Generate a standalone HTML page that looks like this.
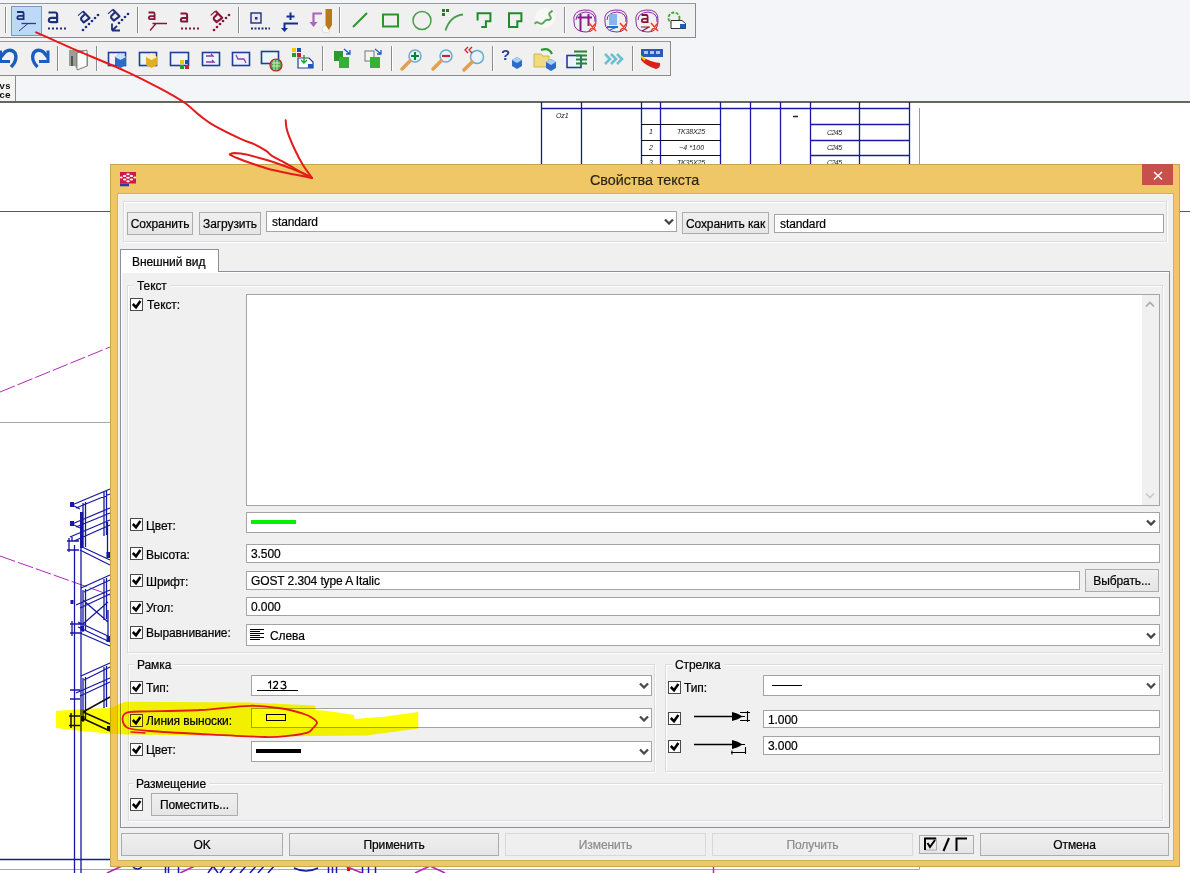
<!DOCTYPE html>
<html><head><meta charset="utf-8">
<style>
*{box-sizing:border-box;margin:0;padding:0}
html,body{width:1190px;height:873px;overflow:hidden;background:#fff}
body{position:relative;font-family:"Liberation Sans",sans-serif;font-size:12px;color:#000;-webkit-text-stroke:0.2px currentColor;letter-spacing:-0.1px}
.a{position:absolute}
#topbar{left:0;top:0;width:1190px;height:103px;background:#f4f5f8;border-bottom:2px solid #66665e}
.tb{position:absolute;background:#f0f0f0;border-top:1px solid #999;border-right:1px solid #8a8a8a;border-bottom:1px solid #8a8a8a}
.sep{position:absolute;width:1px;background:#8a8a8a;border-right:1px solid #fff}
#dlg{left:110px;top:164px;width:1070px;height:703px;background:#f0c766;border:1px solid #c5a24e}
#client{left:7px;top:30px;width:1055px;height:665px;background:#f0f0f0}
.btn{position:absolute;border:1px solid #acacac;background:linear-gradient(#f0f0f0,#e5e5e5);text-align:center;white-space:nowrap}
.fld{position:absolute;border:1px solid #a4a4a4;background:#fff;white-space:nowrap}
.grp{position:absolute;border:1px solid #dcdcdc;box-shadow:inset 1px 1px 0 #fff,1px 1px 0 #fff}
.glab{position:absolute;background:#f0f0f0;padding:0 3px;white-space:nowrap}
.cb{position:absolute;width:13px;height:13px;border:1px solid #4a4a4a;background:#fff}
.cb svg{position:absolute;left:0;top:0}
.lab{position:absolute;white-space:nowrap}
.chev{position:absolute;width:10px;height:7px}
.lab{margin-top:1px}
.btn{padding-top:1px}
.fld{padding-top:1px}
</style></head><body>

<div id="topbar" class="a">
  <div class="tb" style="left:-4px;top:3px;width:700px;height:35px"></div>
  <div class="tb" style="left:-4px;top:41px;width:675px;height:35px"></div>
  <div class="a" style="left:-10px;top:76px;width:26px;height:25px;border-right:1px solid #8a8a8a;background:#f4f4f2"></div>
</div>



<svg class="a" style="left:0;top:0" width="700" height="100" viewBox="0 0 700 100">
 <g stroke="#8c8c8c" stroke-width="1"><path d="M5.5 7V33 M137.5 7V33 M238.5 7V33 M339.5 7V33 M564.5 7V33"/></g>
 <g stroke="#fff" stroke-width="1"><path d="M6.5 7V33 M138.5 7V33 M239.5 7V33 M340.5 7V33 M565.5 7V33"/></g>
 <rect x="11.5" y="6.5" width="30" height="29" fill="#bcd9f7" stroke="#7898c0"/>
  <path d="M17.0 12 H22.5 Q23.6 12 23.6 14.0 V20 M23.6 15.95 H19.4 Q17.4 15.95 17.4 17.95 V18.0 Q17.4 19.1 19.4 19.1 H23.6" stroke="#1f2f78" stroke-width="1.8" fill="none"/>
 <path d="M48.5 12.5 H55.5 Q57.1 12.5 57.1 15.0 V23.0 M57.1 17.825 H51.4 Q48.9 17.825 48.9 20.325 V20.5 Q48.9 22.1 51.4 22.1 H57.1" stroke="#1f2f78" stroke-width="2.2" fill="none"/>
 <path d="M148.5 12.5 H153.625 Q154.6 12.5 154.6 14.375 V20.0 M154.6 16.175 H150.775 Q148.9 16.175 148.9 18.05 V18.125 Q148.9 19.1 150.775 19.1 H154.6" stroke="#8a1438" stroke-width="1.8" fill="none"/>
 <path d="M180.5 13.5 H186.0 Q187.1 13.5 187.1 15.5 V22.5 M187.1 18.0 H182.9 Q180.9 18.0 180.9 20.0 V20.5 Q180.9 21.6 182.9 21.6 H187.1" stroke="#8a1438" stroke-width="2" fill="none"/>
 <path d="M21.5 23.5H36" stroke="#2a3f80" stroke-width="1.3"/><path d="M19 31L28 23.5" stroke="#2a3f80" stroke-width="1"/>
 <path d="M152.5 23.5H167 M150 30.5L156 23.5" stroke="#8a1438" stroke-width="1.3"/>
 <path d="M48 28.5H68" stroke="#1f2f78" stroke-width="2" stroke-dasharray="2 2"/>
 <path d="M181 28.5H199" stroke="#8a1438" stroke-width="2" stroke-dasharray="2 2"/>
 <path d="M251 28.5H270" stroke="#1f2f78" stroke-width="2" stroke-dasharray="2 1.5"/>
 <g transform="translate(84.5 18.8)"><path d="M-1.7 -7.5 L5 -0.7 L-0.7 3.6 L-3.2 1 Q-3.7 0 -3.2 -1 L0 -4.2" stroke="#1f2f78" stroke-width="2.1" fill="none" stroke-linejoin="round"/><path d="M-6.5 -3.2 L-1.7 -7.5" stroke="#1f2f78" stroke-width="1.1"/></g>
 <g fill="#1f2f78"><circle cx="83" cy="30" r="1.35"/><circle cx="86" cy="27" r="1.35"/><circle cx="89" cy="24" r="1.35"/><circle cx="92" cy="21" r="1.35"/><circle cx="95" cy="18" r="1.35"/><circle cx="98" cy="15" r="1.35"/></g>
 <g transform="translate(114.5 17)"><path d="M-1.7 -7.5 L5 -0.7 L-0.7 3.6 L-3.2 1 Q-3.7 0 -3.2 -1 L0 -4.2" stroke="#1f2f78" stroke-width="2.1" fill="none" stroke-linejoin="round"/><path d="M-6.5 -3.2 L-1.7 -7.5" stroke="#1f2f78" stroke-width="1.1"/></g>
 <g fill="#1f2f78"><circle cx="119" cy="23" r="1.35"/><circle cx="122" cy="20" r="1.35"/><circle cx="125" cy="17" r="1.35"/><circle cx="128" cy="14" r="1.35"/></g>
 <path d="M112 30.5L117 26 M112 30.5H120 M112 30.5V23.5" stroke="#1f2f78" stroke-width="1.8" fill="none"/>
 <g transform="translate(217.2 18.5)"><path d="M-1.7 -7.5 L5 -0.7 L-0.7 3.6 L-3.2 1 Q-3.7 0 -3.2 -1 L0 -4.2" stroke="#8a1438" stroke-width="2.1" fill="none" stroke-linejoin="round"/><path d="M-6.5 -3.2 L-1.7 -7.5" stroke="#8a1438" stroke-width="1.1"/></g>
 <g fill="#8a1438"><circle cx="214" cy="30" r="1.35"/><circle cx="217" cy="27" r="1.35"/><circle cx="220" cy="24" r="1.35"/><circle cx="223" cy="21" r="1.35"/><circle cx="226" cy="18" r="1.35"/><circle cx="229" cy="15" r="1.35"/></g>
 <rect x="251" y="13" width="10" height="10" fill="#e8e8f0" stroke="#1f2f78" stroke-width="1.4"/><rect x="255" y="17" width="2.5" height="2.5" fill="#1f2f78"/>
 <path d="M290.5 12.5V20 M286.5 16.5H294.5" stroke="#10308c" stroke-width="2"/>
 <path d="M298 23.5H284.5V29" stroke="#10308c" stroke-width="2" fill="none"/><path d="M281 28H288L284.5 32Z" fill="#10308c"/>
 <path d="M322 13.5H313.5V24" stroke="#a868b8" stroke-width="2.2" fill="none"/><path d="M309.5 22H317.5L313.5 27Z" fill="#a868b8"/>
 <circle cx="326" cy="29" r="4" fill="#fafafa" stroke="#ddd"/>
 <path d="M325.5 9H332V25L328.8 30L325.5 25Z" fill="#b77a16"/>
 <path d="M353 27L367 13" stroke="#2a962a" stroke-width="2"/>
 <rect x="383" y="14.5" width="15" height="12" fill="none" stroke="#2a962a" stroke-width="2"/>
 <circle cx="422" cy="20.5" r="9" fill="none" stroke="#48a048" stroke-width="1.5"/>
 <rect x="442" y="9" width="3" height="3" fill="#2a7a2a"/><rect x="446" y="9" width="3" height="3" fill="#2a7a2a"/><rect x="442" y="13" width="3" height="3" fill="#2a7a2a"/>
 <path d="M445.5 30.5Q450 16 463 14.5" stroke="#48a048" stroke-width="1.8" fill="none"/>
 <path d="M477.6 20.5V13.3H490.4V21.3H485.9V26.9H481.3" stroke="#1e8a2a" stroke-width="2" fill="none"/>
 <path d="M509 26.9V13.3H521.4V21.3H517.3V26.9Z" stroke="#1e8a2a" stroke-width="2" fill="none"/>
 <circle cx="545" cy="18" r="10" fill="#f8f8f6"/>
 <path d="M535 24Q536 21 539 23Q542 25 544 22Q546 19 549 20Q552 19 550 16Q548 13 551 12L552.5 10.5" stroke="#58a858" stroke-width="2" fill="none"/>
 <g fill="none" stroke="#8a2aa0" stroke-width="1">
  <path d="M574 22Q572 11 584 10Q597 9 596 21Q596 32 586 32Q574 32 574 22Z"/><path d="M576 20Q576 13 586 12Q596 13 595 22"/>
  <path d="M605 22Q603 11 615 10Q628 9 627 21Q627 32 617 32Q605 32 605 22Z"/><path d="M607 20Q607 13 617 12Q627 13 626 22"/>
  <path d="M636 22Q634 11 646 10Q659 9 658 21Q658 32 648 32Q636 32 636 22Z"/><path d="M638 20Q638 13 648 12Q658 13 657 22"/>
 </g>
 <path d="M577.5 17.5H592 M580.5 14V31 M588.5 14V26" stroke="#8a1a8a" stroke-width="2"/>
 <rect x="609" y="14" width="8" height="11" fill="#8ab4ee"/><path d="M607 27H618" stroke="#2070d0" stroke-width="2"/><path d="M610 30L617 27" stroke="#2070d0" stroke-width="1.2"/>
 <path d="M641.5 15 H646.625 Q647.6 15 647.6 16.875 V23 M647.6 18.95 H643.775 Q641.9 18.95 641.9 20.825 V21.125 Q641.9 22.1 643.775 22.1 H647.6" stroke="#8a1438" stroke-width="1.8" fill="none"/><path d="M641 27H650M642 31L649 27" stroke="#8a1438" stroke-width="1.2"/>
 <g stroke="#e84020" stroke-width="1.5"><path d="M589 23L596 31 M596 23L589 31 M620 23L627 31 M627 23L620 31 M651 23L658 31 M658 23L651 31"/></g>
 <circle cx="674" cy="18" r="5.5" fill="none" stroke="#38a838" stroke-width="1.8" stroke-dasharray="3 1.5"/>
 <path d="M671 20.5H682L685.5 23.5V28.5H671Z" fill="#fff" stroke="#333" stroke-width="1"/><rect x="680" y="24" width="5.5" height="4.5" fill="#1c5cc0"/>
 <g stroke="#8c8c8c" stroke-width="1"><path d="M57.5 46V71 M96.5 46V71 M322.5 46V71 M391.5 46V71 M492.5 46V71 M593.5 46V71 M632.5 46V71"/></g>
 <g stroke="#fff" stroke-width="1"><path d="M58.5 46V71 M97.5 46V71 M323.5 46V71 M392.5 46V71 M493.5 46V71 M594.5 46V71 M633.5 46V71"/></g>
 <path d="M11 67 Q18 60 15 53 Q11 48 5 52 L1 57" stroke="#1a5cc0" stroke-width="3.4" fill="none"/><path d="M0.5 50.5V61.5H10" stroke="#1a5cc0" stroke-width="3" fill="none"/>
 <path d="M37.5 67 Q30.5 60 33.5 53 Q37.5 48 43.5 52 L47.5 57" stroke="#1a5cc0" stroke-width="3.4" fill="none"/><path d="M48 50.5V61.5H39" stroke="#1a5cc0" stroke-width="3" fill="none"/>
 <path d="M69 50H86L88 54V66L78 70L75 66H69Z" fill="#9a9e98"/><path d="M77 53L87 50V66L77 70Z" fill="#fbfbfb" stroke="#6a6e6a" stroke-width="0.8"/><path d="M72 56V66" stroke="#555" stroke-width="2"/>
 <g fill="#eef4fc" stroke="#1f3e96" stroke-width="1.6">
  <rect x="108.5" y="52.5" width="17" height="13"/><rect x="139.5" y="52.5" width="17" height="13"/><rect x="170.5" y="52.5" width="18" height="13"/><rect x="202.5" y="52.5" width="17" height="13"/><rect x="232.5" y="52.5" width="17" height="13"/><rect x="261.5" y="51.5" width="17" height="12"/>
 </g>
 <path d="M115 57L120.5 53L126 57V65L120.5 68L115 65Z" fill="#2c6cc8"/><path d="M115 57L120.5 53L126 57L120.5 60Z" fill="#c8e0fa"/>
 <path d="M146 57L151.5 53L157 57V65L151.5 68L146 65Z" fill="#e0b020"/><path d="M146 57L151.5 53L157 57L151.5 60Z" fill="#fff4c0"/>
 <rect x="180" y="60" width="4" height="4" fill="#f0c800"/><rect x="185" y="60" width="4" height="4" fill="#1850b0"/><rect x="180" y="65" width="4" height="4" fill="#20a020"/><rect x="185" y="65" width="4" height="4" fill="#d02020"/>
 <path d="M206 56H213L211 54 M206 62H214L212 60" stroke="#8a3ab0" stroke-width="1.3" fill="none"/>
 <path d="M236 55L238 59 L244 59 L246 63" stroke="#8a3ab0" stroke-width="1.3" fill="none"/>
 <circle cx="276" cy="65" r="6" fill="#48a848" stroke="#c02020" stroke-width="1.2"/><path d="M272 63H280M272 66H280M274 60V70M277 60V70" stroke="#d8f0d8" stroke-width="0.9"/>
 <rect x="292" y="48" width="4" height="4" fill="#f0c800"/><rect x="297" y="48" width="4" height="4" fill="#1850b0"/><rect x="292" y="53" width="4" height="4" fill="#20a020"/><rect x="297" y="53" width="4" height="4" fill="#d02020"/>
 <path d="M298 58H309L313 62V68H298Z" fill="#fff" stroke="#1f3e96" stroke-width="1.2"/><rect x="308" y="64" width="5" height="4" fill="#1c5cc0"/><path d="M304 55V63M301 60L304 63L307 60" stroke="#20a020" stroke-width="1.4" fill="none"/>
 <rect x="334" y="51" width="9" height="10" fill="#2a9a2a"/><rect x="339" y="57" width="10" height="11" fill="#36b036"/><path d="M344 49L350 54M350 50V54H346" stroke="#1c5cc0" stroke-width="1.3" fill="none"/>
 <rect x="365" y="51" width="9" height="10" fill="#f4f4f4" stroke="#777"/><rect x="370" y="57" width="10" height="11" fill="#36b036"/><path d="M375 49L381 54M381 50V54H377" stroke="#1c5cc0" stroke-width="1.3" fill="none"/>
 <g><circle cx="415" cy="56" r="6" fill="#e8f4fa" stroke="#6aaad0" stroke-width="1.5"/><path d="M410 61L402 69" stroke="#e0a050" stroke-width="3.5" stroke-linecap="round"/><path d="M415 52V60M411 56H419" stroke="#108030" stroke-width="2.2"/></g>
 <g><circle cx="446" cy="56" r="6" fill="#e8f4fa" stroke="#6aaad0" stroke-width="1.5"/><path d="M441 61L433 69" stroke="#e0a050" stroke-width="3.5" stroke-linecap="round"/><path d="M442 56H450" stroke="#d02030" stroke-width="2.2"/></g>
 <g><circle cx="477" cy="57" r="6.5" fill="#e8f4fa" stroke="#6aaad0" stroke-width="1.5"/><path d="M472 62L464 70" stroke="#e0a050" stroke-width="3.5" stroke-linecap="round"/><path d="M468 47L465 50L468 53M472 47L469 50L472 53" stroke="#d02020" stroke-width="1.3" fill="none"/></g>
 <text x="501" y="60" font-family="Liberation Sans" font-weight="bold" font-size="15" fill="#2a3e8e">?</text>
 <path d="M512 60L517 57L522 60V66L517 69L512 66Z" fill="#2c6cc8"/><path d="M512 60L517 57L522 60L517 63Z" fill="#a8d0fa"/>
 <path d="M534 54H541L543 56H549V67H534Z" fill="#f0dc80" stroke="#c8a830" stroke-width="0.8"/>
 <path d="M541 50Q549 47 552 54" stroke="#2a9a2a" stroke-width="2" fill="none"/>
 <path d="M546 62L551 59L556 62V68L551 71L546 68Z" fill="#2c6cc8"/><path d="M546 62L551 59L556 62L551 65Z" fill="#a8d0fa"/>
 <rect x="567" y="55.5" width="14" height="12" fill="#eef4fc" stroke="#1f3e96" stroke-width="1.6"/>
 <path d="M574 51.5H587M576 55.5H587M576 59.5H587M576 63.5H587" stroke="#1e8a2e" stroke-width="2"/>
 <path d="M605 54L610 59L605 64 M611 54L616 59L611 64 M617 54L622 59L617 64" stroke="#6ac0d0" stroke-width="2.6" fill="none"/>
 <rect x="641" y="49" width="22" height="8" fill="#2858b8"/><rect x="644" y="51" width="4" height="3" fill="#a8c8f0"/><rect x="650" y="51" width="4" height="3" fill="#a8c8f0"/><rect x="656" y="51" width="4" height="3" fill="#a8c8f0"/>
 <path d="M641 56Q650 62 660 63Q661 68 656 69Q646 66 641 60Z" fill="#d82020"/>
 <path d="M641 56L645 60" stroke="#e8d020" stroke-width="2"/>
 <text x="10.5" y="88.5" font-family="Liberation Mono" font-size="9.5" font-weight="bold" fill="#111" text-anchor="end">vs</text>
 <text x="10.5" y="97.5" font-family="Liberation Mono" font-size="9.5" font-weight="bold" fill="#111" text-anchor="end">rce</text>
</svg>

<!-- CAD canvas -->
<svg class="a" style="left:0;top:102px" width="1190" height="771" viewBox="0 102 1190 771">
 <g stroke="#1818a4" stroke-width="1.3" fill="none">
  <path d="M541.5 102V164 M581.5 102V164 M641.5 102V164 M660.5 102V164 M720.5 102V164 M750.5 102V164 M780.5 102V164 M810.5 102V164 M859.5 102V164 M909.5 102V164"/>
  <path d="M541 108.5H910"/>
  <path d="M810 124.5H910 M810 140.5H910 M810 155.5H910"/>
 </g>
 <path d="M641 124.5H721 M641 140.5H721 M641 155.5H721" stroke="#111" stroke-width="1.2"/>
 <path d="M919.5 108V164" stroke="#999" stroke-width="1"/>
 <g font-family="Liberation Sans" font-style="italic" font-size="7" fill="#222">
  <text x="556" y="118">Oz1</text>
  <text x="649" y="134">1</text><text x="677" y="134" textLength="28">TK38X25</text>
  <text x="649" y="150">2</text><text x="679" y="150" textLength="25">−4 *100</text>
  <text x="649" y="165">3</text><text x="677" y="165" textLength="28">TK35X25</text>
  <text x="827" y="135" textLength="15">C245</text>
  <text x="827" y="150" textLength="15">C245</text>
  <text x="827" y="165" textLength="15">C245</text>
 </g>
 <path d="M793 116.5H798" stroke="#222" stroke-width="1.5"/>
 <path d="M0 211.5H110 M1180 211.5H1190" stroke="#a820b0" stroke-width="1"/>
 <path d="M0 392L110 347" stroke="#b428b8" stroke-width="1" stroke-dasharray="16 3"/>
 <path d="M0 556L110 595" stroke="#b428b8" stroke-width="1" stroke-dasharray="16 3"/>
 <path d="M0 422.5H110" stroke="#a8a8a8" stroke-width="1"/>
 <path d="M0 859.5H110" stroke="#1818a4" stroke-width="1.3"/>
 <path d="M0 869.5H919.5V866" stroke="#a8a8a8" stroke-width="1" fill="none"/>
 <path d="M713.5 866V873" stroke="#b428b8" stroke-width="1.5"/>
 <!-- railing -->
 <path d="M74.5 545V873 M81 548V873" stroke="#1818a4" stroke-width="1.3"/>
 <path d="M72 505L110 489 M76 508L110 494 M72 524L110 508 M76 527L110 513 M72 505L80 509 M72 524L80 528 M70 537L110 520 M74 541L110 525 M72 537L72 541 M80 546L110 560 M80 550L110 565 M83 503L83 548 M85.5 502L85.5 547 M104 492L104 536 M106.5 491L106.5 535 M107.5 522L107.5 558 M67 541L79 541 M67 550L79 550 M69 538L69 552" stroke="#1818a4" stroke-width="1.3" fill="none"/><g fill="#1818a4"><rect x="70" y="502" width="4" height="5"/><rect x="70" y="521" width="4" height="5"/><rect x="80" y="512" width="3.2" height="36"/><rect x="106.5" y="552" width="3.5" height="6"/></g>
 <path d="M81 588L110 575 M84 592L110 580 M76 605L110 590 M80 608L110 594 M83 600L108 622 M83 624L108 602 M70 624L82 624 M70 633L82 633 M72 621L72 636 M78 622L110 637 M78 627L110 642 M80 633L110 646 M83 590L83 632 M85.5 589L85.5 631 M104 579L104 620 M106.5 578L106.5 619 M108 610L108 642" stroke="#1818a4" stroke-width="1.3" fill="none"/><g fill="#1818a4"><rect x="80.5" y="626" width="3.5" height="5"/><rect x="106.5" y="636" width="3.5" height="6"/><rect x="70.5" y="600" width="3" height="4"/></g>
 <path d="M81 676L110 663 M84 680L110 667 M76 693L110 678 M80 696L110 682 M83 678L83 722 M85.5 677L85.5 720 M104 667L104 708 M106.5 666L106.5 707 M70 690L80 690 M70 699L80 699" stroke="#1818a4" stroke-width="1.3" fill="none"/>
 <path d="M83 712L110 697 M83 712L110 724 M69 725.5H80 M69 716H80 M84 719L110 731 M71 713V728" stroke="#111" stroke-width="1.5" fill="none"/><rect x="81" y="716" width="3.5" height="5" fill="#111"/><rect x="107" y="726" width="3.5" height="5" fill="#111"/>
 <!-- bottom scribbles -->
 <path d="M107 873L122 866 M180 873L195 866 M345 866L362 873 M415 873L430 866 M430 866L445 873" stroke="#b428b8" stroke-width="1.6"/>
 <g stroke="#1818a4" stroke-width="1.5" fill="none">
  <path d="M165.5 866V873 M168.5 866V873 M178.5 866V873 M328.5 866V873 M332.5 866V873 M336.5 866V873 M362.5 866V873 M368.5 866V873 M375.5 866V873"/>
  <path d="M208 873L213 866 M213 866L218 873 M220 873L225 866 M230 873L236 866 M240 873L246 866 M250 873L256 866 M258 873L264 866 M268 873L274 866"/>
  <path d="M294 868Q306 874 318 868"/>
  <path d="M133 867Q137 871 142 867"/>
 </g>
 <rect x="347" y="868" width="3" height="3" fill="#e01010"/>
</svg>

<!-- dialog -->
<div class="a" style="left:110px;top:164px;width:1070px;height:703px;background:#f0c766;border:1px solid #c9a452"></div>
<div class="a" style="left:117px;top:193px;width:1057px;height:668px;border:1px solid #d2b060"></div>
<div class="a" style="left:118px;top:194px;width:1055px;height:666px;background:#f0f0f0;border:1px solid #fbf6ee;border-right:none;border-bottom:none"></div>
<!-- title -->
<svg class="a" style="left:116px;top:167px" width="24" height="24" viewBox="116 167 24 24">
 <rect x="120" y="172" width="16" height="11.5" fill="#d01848"/>
 <rect x="120" y="183.5" width="9" height="2.8" fill="#2a3f9a"/>
 <g fill="#fff">
  <ellipse cx="128" cy="174.3" rx="1.8" ry="1"/>
  <ellipse cx="124.6" cy="176" rx="1.8" ry="1"/><ellipse cx="131.4" cy="176" rx="1.8" ry="1"/>
  <ellipse cx="121.3" cy="177.6" rx="1.4" ry="1"/><ellipse cx="128" cy="177.8" rx="1.8" ry="1"/><ellipse cx="134.8" cy="177.6" rx="1.4" ry="1"/>
  <ellipse cx="124.6" cy="179.4" rx="1.8" ry="1"/><ellipse cx="131.4" cy="179.4" rx="1.8" ry="1"/>
  <ellipse cx="128" cy="181.3" rx="1.8" ry="1"/>
 </g>
</svg>
<div class="lab" style="left:590px;top:170px;font-size:15.5px;line-height:18px;color:#2a2418;letter-spacing:0;transform:scaleX(0.925);transform-origin:0 0">Свойства текста</div>
<div class="a" style="left:1142px;top:164px;width:31px;height:21px;background:#c7504b"></div>
<svg class="a" style="left:1150px;top:168px" width="16" height="14" viewBox="1150 168 16 14"><path d="M1154 172 L1162 179.5 M1162 172 L1154 179.5" stroke="#fff" stroke-width="1.5"/></svg>

<!-- top group -->
<div class="grp" style="left:123px;top:201px;width:1044px;height:41px"></div>
<div class="btn" style="left:127px;top:212px;width:66px;height:23px;line-height:21px">Сохранить</div>
<div class="btn" style="left:199px;top:212px;width:62px;height:23px;line-height:21px">Загрузить</div>
<div class="fld" style="left:266px;top:211px;width:411px;height:21px;line-height:19px;padding-left:5px">standard</div>
<svg class="chev" style="left:664px;top:218px" viewBox="0 0 10 7"><path d="M1 1.5 L5 5.5 L9 1.5" stroke="#444" stroke-width="2.3" fill="none"/></svg>
<div class="btn" style="left:682px;top:212px;width:87px;height:22px;line-height:20px">Сохранить как</div>
<div class="fld" style="left:774px;top:214px;width:390px;height:19px;line-height:17px;padding-left:5px">standard</div>

<!-- tab -->
<div class="a" style="left:120px;top:271px;width:1050px;height:557px;border:1px solid #8f9096;background:#f0f0f0;box-shadow:inset 1px 1px 0 #fff"></div>
<div class="a" style="left:120px;top:249px;width:99px;height:23px;border:1px solid #8f9096;border-bottom:none;background:#fff"></div>
<div class="lab" style="left:132px;top:254px;line-height:14px">Внешний вид</div>

<!-- Текст group -->
<div class="grp" style="left:127px;top:285px;width:1036px;height:368px"></div>
<div class="glab" style="left:134px;top:279px;line-height:14px">Текст</div>
<div class="fld" style="left:246px;top:294px;width:914px;height:212px"></div>
<div class="a" style="left:1142px;top:295px;width:17px;height:210px;background:#f0f0f0"></div>
<svg class="chev" style="left:1145px;top:301px" viewBox="0 0 10 7"><path d="M1 5.5 L5 1.5 L9 5.5" stroke="#a8a8a8" stroke-width="1.6" fill="none"/></svg>
<svg class="chev" style="left:1145px;top:492px" viewBox="0 0 10 7"><path d="M1 1.5 L5 5.5 L9 1.5" stroke="#c8c8c8" stroke-width="1.6" fill="none"/></svg>

<div class="cb" style="left:130px;top:298px"><svg width="11" height="11" viewBox="0 0 11 11"><path d="M1.8 5 L5 8.2 L9.4 2" stroke="#000" stroke-width="2.5" fill="none"/></svg></div><div class="lab" style="left:147px;top:297px;line-height:14px">Текст:</div>
<div class="cb" style="left:130px;top:518px"><svg width="11" height="11" viewBox="0 0 11 11"><path d="M1.8 5 L5 8.2 L9.4 2" stroke="#000" stroke-width="2.5" fill="none"/></svg></div><div class="lab" style="left:146px;top:518px;line-height:14px">Цвет:</div>
<div class="fld" style="left:246px;top:512px;width:914px;height:21px"></div>
<div class="a" style="left:251px;top:520px;width:45px;height:4px;background:#00f000"></div>
<svg class="chev" style="left:1146px;top:519px" viewBox="0 0 10 7"><path d="M1 1.5 L5 5.5 L9 1.5" stroke="#444" stroke-width="2.3" fill="none"/></svg>
<div class="cb" style="left:130px;top:547px"><svg width="11" height="11" viewBox="0 0 11 11"><path d="M1.8 5 L5 8.2 L9.4 2" stroke="#000" stroke-width="2.5" fill="none"/></svg></div><div class="lab" style="left:146px;top:547px;line-height:14px">Высота:</div>
<div class="fld" style="left:246px;top:544px;width:914px;height:19px;line-height:17px;padding-left:4px">3.500</div>
<div class="cb" style="left:130px;top:574px"><svg width="11" height="11" viewBox="0 0 11 11"><path d="M1.8 5 L5 8.2 L9.4 2" stroke="#000" stroke-width="2.5" fill="none"/></svg></div><div class="lab" style="left:146px;top:574px;line-height:14px">Шрифт:</div>
<div class="fld" style="left:246px;top:571px;width:834px;height:19px;line-height:17px;padding-left:4px">GOST 2.304 type A Italic</div>
<div class="btn" style="left:1085px;top:569px;width:74px;height:23px;line-height:21px">Выбрать...</div>
<div class="cb" style="left:130px;top:601px"><svg width="11" height="11" viewBox="0 0 11 11"><path d="M1.8 5 L5 8.2 L9.4 2" stroke="#000" stroke-width="2.5" fill="none"/></svg></div><div class="lab" style="left:146px;top:600px;line-height:14px">Угол:</div>
<div class="fld" style="left:246px;top:597px;width:914px;height:19px;line-height:17px;padding-left:4px">0.000</div>
<div class="cb" style="left:130px;top:626px"><svg width="11" height="11" viewBox="0 0 11 11"><path d="M1.8 5 L5 8.2 L9.4 2" stroke="#000" stroke-width="2.5" fill="none"/></svg></div><div class="lab" style="left:146px;top:625px;line-height:14px">Выравнивание:</div>
<div class="fld" style="left:246px;top:624px;width:914px;height:22px"></div>
<svg class="a" style="left:250px;top:629px" width="14" height="11" viewBox="0 0 14 11"><path d="M0 0.5H14M0 2.5H10M0 4.5H14M0 6.5H10M0 8.5H14M0 10.5H10" stroke="#000" stroke-width="1"/></svg>
<div class="lab" style="left:270px;top:628px;line-height:14px">Слева</div>
<svg class="chev" style="left:1146px;top:632px" viewBox="0 0 10 7"><path d="M1 1.5 L5 5.5 L9 1.5" stroke="#444" stroke-width="2.3" fill="none"/></svg>

<!-- Рамка -->
<div class="grp" style="left:128px;top:664px;width:527px;height:108px"></div>
<div class="glab" style="left:134px;top:658px;line-height:14px">Рамка</div>
<div class="cb" style="left:130px;top:681px"><svg width="11" height="11" viewBox="0 0 11 11"><path d="M1.8 5 L5 8.2 L9.4 2" stroke="#000" stroke-width="2.5" fill="none"/></svg></div><div class="lab" style="left:146px;top:680px;line-height:14px">Тип:</div>
<div class="fld" style="left:251px;top:675px;width:401px;height:21px"></div>
<svg class="a" style="left:265px;top:679px" width="25" height="12" viewBox="265 679 25 12"><path d="M268.3 683.2 L270.5 681.3 V688.8 M273.4 683 Q273.8 681.3 275.6 681.3 Q277.6 681.3 277.6 683.1 Q277.6 684.5 273.6 688.3 H278 M280.8 682.3 Q281.6 681.3 283.3 681.3 Q285.5 681.3 285.5 683 Q285.5 684.7 283 684.8 Q286 684.9 286 686.8 Q286 688.8 283.3 688.8 Q281.3 688.8 280.6 687.6" stroke="#000" stroke-width="1.15" fill="none"/></svg>
<div class="a" style="left:257px;top:690px;width:41px;height:1px;background:#000"></div>
<svg class="chev" style="left:639px;top:682px" viewBox="0 0 10 7"><path d="M1 1.5 L5 5.5 L9 1.5" stroke="#4a4a4a" stroke-width="2.3" fill="none"/></svg>
<div class="cb" style="left:130px;top:714px"><svg width="11" height="11" viewBox="0 0 11 11"><path d="M1.8 5 L5 8.2 L9.4 2" stroke="#000" stroke-width="2.5" fill="none"/></svg></div><div class="lab" style="left:146px;top:713px;line-height:14px">Линия выноски:</div>
<div class="fld" style="left:251px;top:708px;width:401px;height:20px"></div>
<div class="a" style="left:266px;top:714px;width:20px;height:7px;border:1px solid #000"></div>
<svg class="chev" style="left:639px;top:715px" viewBox="0 0 10 7"><path d="M1 1.5 L5 5.5 L9 1.5" stroke="#4a4a4a" stroke-width="2.3" fill="none"/></svg>
<div class="cb" style="left:130px;top:743px"><svg width="11" height="11" viewBox="0 0 11 11"><path d="M1.8 5 L5 8.2 L9.4 2" stroke="#000" stroke-width="2.5" fill="none"/></svg></div><div class="lab" style="left:146px;top:742px;line-height:14px">Цвет:</div>
<div class="fld" style="left:251px;top:741px;width:401px;height:21px"></div>
<div class="a" style="left:256px;top:749px;width:45px;height:4px;background:#000"></div>
<svg class="chev" style="left:639px;top:748px" viewBox="0 0 10 7"><path d="M1 1.5 L5 5.5 L9 1.5" stroke="#4a4a4a" stroke-width="2.3" fill="none"/></svg>

<!-- Стрелка -->
<div class="grp" style="left:665px;top:664px;width:498px;height:108px"></div>
<div class="glab" style="left:672px;top:658px;line-height:14px">Стрелка</div>
<div class="cb" style="left:668px;top:681px"><svg width="11" height="11" viewBox="0 0 11 11"><path d="M1.8 5 L5 8.2 L9.4 2" stroke="#000" stroke-width="2.5" fill="none"/></svg></div><div class="lab" style="left:684px;top:680px;line-height:14px">Тип:</div>
<div class="fld" style="left:763px;top:675px;width:397px;height:21px"></div>
<div class="a" style="left:772px;top:685px;width:30px;height:1px;background:#000"></div>
<svg class="chev" style="left:1146px;top:682px" viewBox="0 0 10 7"><path d="M1 1.5 L5 5.5 L9 1.5" stroke="#4a4a4a" stroke-width="2.3" fill="none"/></svg>
<div class="cb" style="left:668px;top:712px"><svg width="11" height="11" viewBox="0 0 11 11"><path d="M1.8 5 L5 8.2 L9.4 2" stroke="#000" stroke-width="2.5" fill="none"/></svg></div>
<svg class="a" style="left:690px;top:705px" width="65" height="55" viewBox="690 705 65 55">
 <path d="M694 716.5H733" stroke="#000" stroke-width="1.3"/>
 <path d="M732 712 L737 713.5 L740 715 L742.5 716.5 L740 718 L737 719.5 L732 721 Z" fill="#000"/><path d="M741 716.5H745" stroke="#000" stroke-width="1"/>
 <path d="M740 712.5H750 M740 720.5H750 M747.5 711V722" stroke="#000" stroke-width="1.1"/>
 <path d="M694 744.5H733" stroke="#000" stroke-width="1.3"/>
 <path d="M732 740 L737 741.5 L740 743 L742.5 744.5 L740 746 L737 747.5 L732 749 Z" fill="#000"/><path d="M741 744.5H745" stroke="#000" stroke-width="1"/>
 <path d="M731 752.5H746 M745.5 747V754 M732 750.5V754.5" stroke="#000" stroke-width="1.1"/>
</svg>
<div class="fld" style="left:763px;top:710px;width:397px;height:18px;line-height:16px;padding-left:4px">1.000</div>
<div class="cb" style="left:668px;top:740px"><svg width="11" height="11" viewBox="0 0 11 11"><path d="M1.8 5 L5 8.2 L9.4 2" stroke="#000" stroke-width="2.5" fill="none"/></svg></div>

<div class="fld" style="left:763px;top:736px;width:397px;height:19px;line-height:17px;padding-left:4px">3.000</div>

<!-- Размещение -->
<div class="grp" style="left:128px;top:783px;width:1035px;height:38px"></div>
<div class="glab" style="left:133px;top:777px;line-height:14px">Размещение</div>
<div class="cb" style="left:130px;top:798px"><svg width="11" height="11" viewBox="0 0 11 11"><path d="M1.8 5 L5 8.2 L9.4 2" stroke="#000" stroke-width="2.5" fill="none"/></svg></div>
<div class="btn" style="left:151px;top:793px;width:87px;height:23px;line-height:21px">Поместить...</div>

<!-- bottom buttons -->
<div class="btn" style="left:121px;top:833px;width:162px;height:23px;line-height:21px">OK</div>
<div class="btn" style="left:289px;top:833px;width:210px;height:23px;line-height:21px">Применить</div>
<div class="btn" style="left:505px;top:833px;width:201px;height:23px;line-height:21px;color:#8d8d8d;border-color:#d9d9d9;background:#efefef">Изменить</div>
<div class="btn" style="left:712px;top:833px;width:201px;height:23px;line-height:21px;color:#8d8d8d;border-color:#d9d9d9;background:#efefef">Получить</div>
<div class="btn" style="left:919px;top:835px;width:55px;height:19px"></div>
<svg class="a" style="left:924px;top:837px" width="46" height="15" viewBox="0 0 46 15"><path d="M1 13V1.5H12" stroke="#000" stroke-width="2" fill="none"/><path d="M1 1H12.5V13H1" stroke="#000" stroke-width="1" fill="none" opacity="0.25"/><path d="M3.5 6 L6 10 L11 3" stroke="#000" stroke-width="2" fill="none"/><path d="M25 1 L19.5 14" stroke="#000" stroke-width="2"/><path d="M32.5 14V1.5H43" stroke="#000" stroke-width="2" fill="none"/></svg>
<div class="btn" style="left:980px;top:833px;width:189px;height:23px;line-height:21px">Отмена</div>


<!-- annotations -->
<svg class="a" style="left:0;top:0;mix-blend-mode:multiply" width="1190" height="873" viewBox="0 0 1190 873">
 <path d="M56 711 Q80 709 110 708 L125 701.7 L250 702.6 L315.3 705.6 L315.3 709.7 L334.7 712 L354 715 L354.5 719 L384 716.8 L418.2 712.1 L418.2 728.5 L395.9 731.5 L366.5 735.6 L290 736.2 L240 736.5 Q180 735 125 734.5 L110 733.6 Q80 731 56 728 Z" fill="#ffff00"/>
</svg>
<svg class="a" style="left:0;top:0" width="1190" height="873" viewBox="0 0 1190 873">
 <g stroke="#e51a1a" stroke-width="2" fill="none" stroke-linecap="round" stroke-linejoin="round">
  <path d="M36.2 32.3 C42.2 35.0 57.3 42.0 72.0 48.4 C86.7 54.8 109.5 63.9 124.2 70.6 C138.9 77.3 150.0 83.1 160.0 88.4 C170.0 93.7 177.5 97.9 184.2 102.5 C190.9 107.1 195.4 112.1 200.3 115.9 C205.2 119.7 207.1 121.5 213.8 125.3 C220.5 129.1 234.0 135.7 240.7 138.8 C247.4 142.0 249.8 142.2 254.1 144.2 C258.4 146.2 263.3 149.0 266.2 150.9 C269.1 152.8 268.0 153.4 271.6 155.6 C275.2 157.8 282.8 161.5 287.7 164.3 C292.6 167.1 297.1 170.1 301.2 172.4 C305.2 174.7 310.2 177.1 312.0 178.0"/>
  <path d="M285.7 120.2 C285.8 121.5 285.9 125.3 286.5 128.0 C287.1 130.7 287.6 132.4 289.0 136.1 C290.4 139.8 292.8 145.3 295.0 150.0 C297.2 154.7 299.7 159.6 302.5 164.3 C305.3 169.0 310.4 175.7 312.0 178.0"/>
  <path d="M312.0 178.0 C310.4 177.2 305.4 174.4 302.5 173.0 C299.6 171.6 300.2 171.8 294.4 169.7 C288.6 167.6 276.6 163.0 267.6 160.3 C258.7 157.6 247.0 154.6 240.7 153.6 C234.4 152.6 230.5 153.5 229.9 154.2 C229.3 154.9 233.0 156.3 237.0 158.0 C241.0 159.7 248.3 162.4 254.1 164.3 C259.9 166.2 264.9 168.0 271.6 169.7 C278.3 171.4 287.7 173.0 294.4 174.4 C301.1 175.8 309.1 177.4 312.0 178.0"/>
  <path d="M122.6 720.2 C122.3 717.7 123.1 714.5 126.0 713.0 C128.9 711.5 127.7 712.0 140.0 711.5 C152.3 711.0 181.7 711.0 200.0 710.0 C218.3 709.0 236.3 706.0 250.0 705.8 C263.7 705.5 273.0 707.1 282.0 708.5 C291.0 709.9 298.9 712.4 304.0 714.0 C309.1 715.6 310.2 716.6 312.4 718.0 C314.6 719.4 316.9 720.9 317.0 722.6 C317.1 724.3 314.6 726.3 313.0 728.0 C311.4 729.7 311.4 731.3 307.6 732.6 C303.8 733.9 297.1 734.9 290.0 735.6 C282.9 736.3 280.0 737.3 265.0 737.0 C250.0 736.7 219.2 735.0 200.0 734.0 C180.8 733.0 162.0 732.0 150.0 731.0 C138.0 730.0 132.6 729.8 128.0 728.0 C123.4 726.2 122.9 722.7 122.6 720.2 Z" stroke-width="1.8"/>
  <path d="M131 732 L145 733" stroke-width="1.5"/>
 </g>
</svg>

</body></html>
